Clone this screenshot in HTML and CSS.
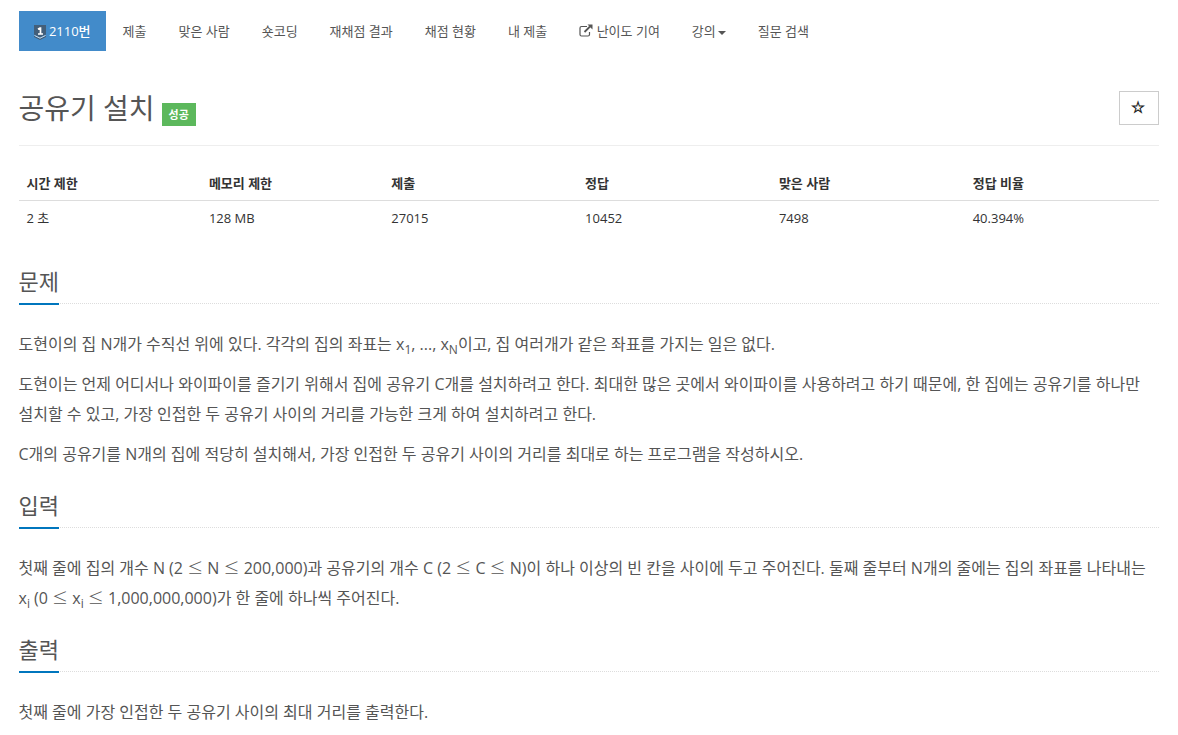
FILE: index.html
```html
<!DOCTYPE html>
<html lang="ko">

<head>
    <meta charset="UTF-8">
    <title>2110번: 공유기 설치</title>

    <link rel="stylesheet" href="styles.css">
</head>

<body>
    <div class="container">
        <ul class="problem-menu">
            <li class="active">
                <a href="#"><svg class="tier" viewBox="0 0 12 15" width="12" height="15"><path d="M0 0h12v9.500l-6 3-6-3z" fill="#435f7a"/><path d="M0 10.500l6 3 6-3v1.500l-6 3-6-3z" fill="#435f7a"/><path d="M0.500 10.500l5.500 2.700 5.500-2.700" fill="none" stroke="#d5e1eb" stroke-width="0.900"/><path d="M4 4.300l2-1.300h.500v6.500M4 9h5" fill="none" stroke="#fff" stroke-width="1.700"/></svg> 2110번</a>
            </li>
            <li><a href="#">제출</a></li>
            <li><a href="#">맞은 사람</a></li>
            <li><a href="#">숏코딩</a></li>
            <li><a href="#">재채점 결과</a></li>
            <li><a href="#">채점 현황</a></li>
            <li><a href="#">내 제출</a></li>
            <li>
                <a href="#"><svg class="external" viewBox="0 0 14 13" width="14" height="13"><path d="M8 2.500H2.500a1.500 1.500 0 0 0-1.500 1.500v6.500A1.500 1.500 0 0 0 2.500 12H9a1.500 1.500 0 0 0 1.500-1.500V8" fill="none" stroke="#555" stroke-width="1.200"/><path d="M5.500 8L11 2.500" stroke="#555" stroke-width="1.800"/><path d="M8.500 0.500H13.500v5z" fill="#555"/></svg> 난이도 기여</a>
            </li>
            <li><a href="#">강의<b class="caret"></b></a></li>
            <li><a href="#">질문 검색</a></li>
        </ul>

        <div class="page-header">
            <h1>공유기 설치</h1>
            <span class="label">성공</span>
            <button class="favorite">☆</button>
        </div>

        <table class="problem-info">
            <thead>
                <tr>
                    <th>시간 제한</th>
                    <th>메모리 제한</th>
                    <th>제출</th>
                    <th>정답</th>
                    <th>맞은 사람</th>
                    <th>정답 비율</th>
                </tr>
            </thead>
            <tbody>
                <tr>
                    <td>2 초</td>
                    <td>128 MB</td>
                    <td>27015</td>
                    <td>10452</td>
                    <td>7498</td>
                    <td>40.394%</td>
                </tr>
            </tbody>
        </table>

        <section>
            <div class="headline"><h2>문제</h2></div>
            <p>도현이의 집 N개가 수직선 위에 있다. 각각의 집의 좌표는 x<sub>1</sub>, ..., x<sub>N</sub>이고, 집 여러개가 같은 좌표를 가지는 일은 없다.</p>
            <p>도현이는 언제 어디서나 와이파이를 즐기기 위해서 집에 공유기 C개를 설치하려고 한다. 최대한 많은 곳에서 와이파이를 사용하려고 하기 때문에, 한 집에는 공유기를 하나만<br>설치할 수 있고, 가장 인접한 두 공유기 사이의 거리를 가능한 크게 하여 설치하려고 한다.</p>
            <p>C개의 공유기를 N개의 집에 적당히 설치해서, 가장 인접한 두 공유기 사이의 거리를 최대로 하는 프로그램을 작성하시오.</p>
        </section>

        <section>
            <div class="headline"><h2>입력</h2></div>
            <p>첫째 줄에 집의 개수 N (2 <i>≤</i> N <i>≤</i> 200,000)과 공유기의 개수 C (2 <i>≤</i> C <i>≤</i> N)이 하나 이상의 빈 칸을 사이에 두고 주어진다. 둘째 줄부터 N개의 줄에는 집의 좌표를 나타내는<br>x<sub>i</sub> (0 <i>≤</i> x<sub>i</sub> <i>≤</i> 1,000,000,000)가 한 줄에 하나씩 주어진다.</p>
        </section>

        <section>
            <div class="headline"><h2>출력</h2></div>
            <p>첫째 줄에 가장 인접한 두 공유기 사이의 최대 거리를 출력한다.</p>
        </section>
    </div>
</body>

</html>
```
FILE: styles.css
```css
* {
    box-sizing: border-box;
}

body {
    margin: 0;
    background: #fff;
    color: #333;
    font-family: "Open Sans", "Noto Sans CJK KR", sans-serif;
    font-size: 13px;
    line-height: 20px;
}

.container {
    width: 1140px;
    margin-left: 18.5px;
    padding-top: 11px;
}

/* Problem menu */
.problem-menu {
    display: flex;
    gap: 2px;
    height: 40px;
    margin: 0;
    padding: 0;
    list-style: none;
}

.problem-menu a {
    display: block;
    height: 40px;
    padding: 10px 15px;
    color: #555;
    text-decoration: none;
    white-space: nowrap;
}

.problem-menu .active a {
    background: #428bca;
    color: #fff;
    font-weight: 500;
}

.tier {
    vertical-align: -4px;
}

.external {
    vertical-align: -1px;
}

.caret {
    display: inline-block;
    margin-left: 2px;
    border-top: 4px solid #555;
    border-right: 4px solid transparent;
    border-left: 4px solid transparent;
    vertical-align: middle;
}

/* Title */
.page-header {
    display: flex;
    height: 95px;
    padding-top: 40px;
    border-bottom: 1px solid #eee;
}

h1 {
    margin: 0;
    color: #555;
    font-size: 28px;
    font-weight: 400;
    line-height: 34px;
}

.label {
    height: 23px;
    margin: 12px 0 0 7px;
    padding: 0 7px;
    background: #5cb85c;
    color: #fff;
    font-size: 11px;
    font-weight: 700;
    line-height: 23px;
}

.favorite {
    width: 40px;
    height: 34px;
    margin-left: auto;
    padding: 0 2px 0 0;
    border: 1px solid #ccc;
    background: #fff;
    color: #222;
    font-size: 14px;
    font-weight: 700;
}

/* Limits and statistics */
.problem-info {
    width: 100%;
    margin: 20px 0 29px;
    border-collapse: collapse;
    table-layout: fixed;
}

.problem-info th,
.problem-info td {
    width: 17%;
    height: 35px;
    padding: 0 8px;
    text-align: left;
}

.problem-info th:nth-child(-n+2) {
    width: 16%;
}

.problem-info th {
    height: 34px;
    border-bottom: 1px solid #ddd;
}

/* Problem text */
section {
    margin-bottom: 19px;
}

.headline {
    height: 40px;
    margin-bottom: 25px;
    border-bottom: 1px dotted #ddd;
}

h2 {
    display: inline-block;
    height: 41px;
    margin: 0;
    border-bottom: 2px solid #0076bd;
    color: #555;
    font-size: 22px;
    font-weight: 400;
    line-height: 34px;
}

section p {
    margin: 0 0 10px;
    color: #555;
    font-size: 16px;
    line-height: 30px;
    white-space: nowrap;
}

/* wide comparison signs */
section p i {
    font-family: "Noto Sans CJK KR", sans-serif;
    font-style: normal;
    font-weight: 300;
    line-height: 0;
}

sub {
    font-size: 75%;
    line-height: 0;
}
```
